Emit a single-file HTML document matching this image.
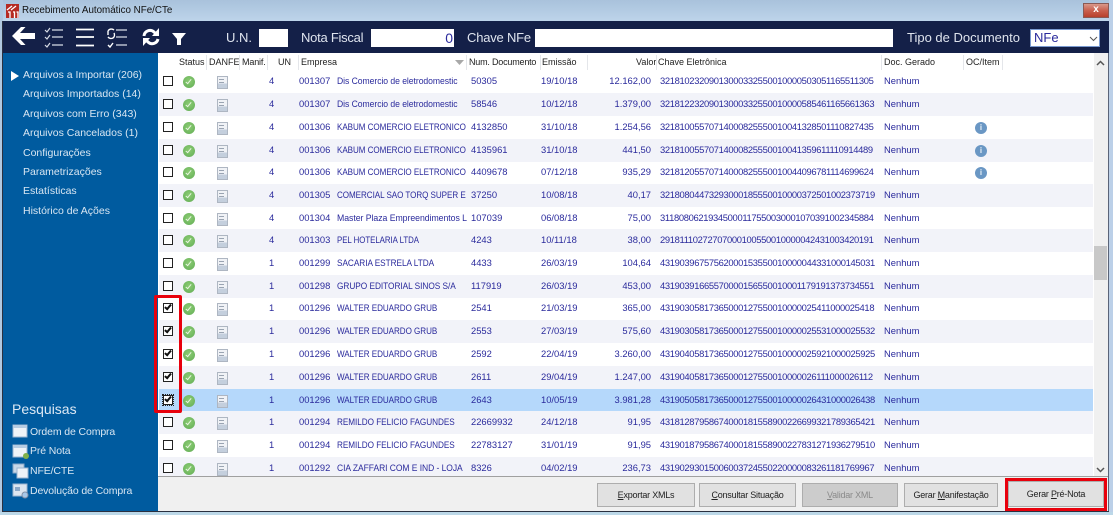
<!DOCTYPE html>
<html><head><meta charset="utf-8"><style>
html,body{margin:0;padding:0}
body{width:1113px;height:515px;overflow:hidden;position:relative;background:#fff;font-family:"Liberation Sans",sans-serif}
div,span{position:absolute;white-space:nowrap}
#title{left:0;top:0;width:1113px;height:21px;background:linear-gradient(#a9c2dc,#bdd4ea)}
#title span{left:22px;top:4px;font-size:9.8px;color:#111;line-height:13px}
#x{left:1083px;top:3px;width:26px;height:15px;background:linear-gradient(#d9988a 0,#c9604e 50%,#b8402c 100%);border:1px solid #8a5a55;box-sizing:border-box;color:#fff;font:bold 10px/12px "Liberation Sans";text-align:center}
#tb{left:4px;top:21px;width:1105px;height:32px;background:#142048}
.tl{color:#dfe4ee;font-size:13px;line-height:18px;top:29px}
.inp{background:#fff;top:29px;height:18px}
#side{left:3px;top:53px;width:155px;height:458px;background:#005b9f}
.sl{color:#d8e6f2;font-size:10.5px;line-height:13px;left:23px}
.ps{color:#d8e6f2;font-size:10.5px;line-height:13px;left:30px;letter-spacing:-.12px}
.h{top:56px;font-size:9px;line-height:13px;color:#222}
.sep{top:55px;width:1px;height:15px;background:#e4e6ea}
.r{left:159px;width:934px;height:23px;font-size:9.4px;line-height:22px;color:#2a2a9c}
.a{background:#f2f3f9}
.s{background:#b5d8fb}
.c{left:4px;top:6px;width:8px;height:8px;border:1px solid #222;background:#fff}
.c.k::after{content:"";position:absolute;left:2px;top:-1px;width:2px;height:5px;border:solid #111;border-width:0 2px 2px 0;transform:rotate(40deg)}
.st{left:24px;top:6px;width:12px;height:12px;border-radius:50%;background:radial-gradient(circle at 50% 40%,#8ccc74,#62ad55)}
.st::after{content:"";position:absolute;left:4px;top:2px;width:2px;height:5px;border:solid #e8f5e0;border-width:0 1.5px 1.5px 0;transform:rotate(40deg)}
.d{left:58px;top:6px;width:11px;height:13px;background:linear-gradient(#f0f2f6 0 58%,#c4cfdd 58% 100%);border:1px solid #aeb6c2;box-sizing:border-box}
.d::after{content:"";position:absolute;left:1px;top:2px;width:5px;height:2px;border-top:1px solid #9aa4b2;border-bottom:1px solid #9aa4b2}
.u{left:110px}.co{left:140px}.e{left:178px;letter-spacing:-.05px;transform-origin:0 50%}.n{left:312px}.em{left:382px}
.v{left:422px;width:70px;text-align:right}.ch{left:501px;letter-spacing:-.33px}.ne{left:725px}
.i{left:816px;top:6px;width:12px;height:12px;border-radius:50%;background:#6a97c4;color:#e8f0f8;font:bold 8px/12px "Liberation Sans";text-align:center}
.rb{border:3.5px solid #e8000c;box-sizing:border-box}
.b{top:483px;height:24px;background:#e1e1e1;border:1px solid #adadad;box-sizing:border-box;font-size:9px;letter-spacing:-.22px;line-height:22px;text-align:center;color:#222}
.b u{text-decoration:underline}
</style></head><body>
<div id="title"><span>Recebimento Automático NFe/CTe</span></div>
<svg style="position:absolute;left:6px;top:4px" width="13" height="14"><rect width="13" height="14" fill="#b52a22"/><path d="M1 6L6 2M5 6L10 2M2 8h2v6M7 8h1.500v6M10.500 8H12v6" stroke="#fff" stroke-width="1.300" fill="none"/></svg>
<div id="x">x</div>
<div style="left:0;top:0;width:3px;height:515px;background:#b0c8e0"></div>
<div style="left:1109px;top:0;width:4px;height:515px;background:#bcd0e8"></div>
<div style="left:2px;top:21px;width:1px;height:491px;background:#2a3040"></div>
<div style="left:1108px;top:21px;width:1px;height:491px;background:#5a6478"></div>
<div style="left:3px;top:511px;width:1106px;height:1px;background:#2a3040"></div>
<div style="left:0;top:512px;width:1113px;height:3px;background:#bcd8e8"></div>
<div style="left:3px;top:21px;width:1106px;height:32px;background:#142048"></div>
<svg style="position:absolute;left:10px;top:25px" width="180" height="24" fill="none" stroke="#fff">
<path d="M2 11L11 2H15.500L10 8H25V14H10L15.500 20H11Z" fill="#fff" stroke="none"/>
<path d="M42 5h11M42 12h11M42 20h11" stroke-width="1.300" stroke="#d8dce6"/>
<path d="M35 5l2 2 3-4M35 12l2 2 3-4M35 20l2 2 3-4" stroke-width="1.200" stroke="#d8dce6"/>
<path d="M66 4.500h18M66 12h18M66 20.500h18" stroke-width="1.800"/>
<path d="M106 5h11M106 12h11M106 20h11" stroke-width="1.300" stroke="#d8dce6"/>
<path d="M98 6a4 4 0 0 1 6-1M104 8a4 4 0 0 1-1 5 4 4 0 0 1-5-1M98 6v4M98 20l2 2 3-4" stroke-width="1.400"/>
<path d="M134 11a6 6 0 0 1 10-4l2 2M148 14a6 6 0 0 1-10 3l-2-2" stroke-width="3"/>
<path d="M149 3v8h-7zM133 21v-8h7z" fill="#fff" stroke="none"/>
<path d="M162 8h14l-5 6v6h-4v-6z" fill="#fff" stroke="none"/>
</svg>
<span class="tl" style="left:226px">U.N.</span>
<div class="inp" style="left:259px;width:29px"></div>
<span class="tl" style="left:301px;letter-spacing:-.25px">Nota Fiscal</span>
<div class="inp" style="left:371px;width:83px;color:#2a2a9c;font-size:14px;line-height:19px;text-align:right;box-sizing:border-box;padding-right:1px">0</div>
<span class="tl" style="left:467px;letter-spacing:-.2px">Chave NFe</span>
<div class="inp" style="left:535px;width:358px"></div>
<span class="tl" style="left:907px">Tipo de Documento</span>
<div class="inp" style="left:1030px;width:70px;border:1px solid #7a9ad0;box-sizing:border-box;color:#2a2a9c;font-size:13px;line-height:15px;padding-left:3px">NFe<svg style="position:absolute;left:58px;top:6px" width="9" height="6" fill="none" stroke="#555"><path d="M1 1l3.500 3.500L8 1"/></svg></div>
<div id="side"></div>
<svg style="position:absolute;left:11px;top:71px" width="9" height="10"><path d="M0 0l8 5-8 5z" fill="#fff"/></svg>
<span class="sl" style="top:69px">Arquivos a Importar (206)</span>
<span class="sl" style="top:88px">Arquivos Importados (14)</span>
<span class="sl" style="top:108px">Arquivos com Erro (343)</span>
<span class="sl" style="top:127px">Arquivos Cancelados (1)</span>
<span class="sl" style="top:147px">Configurações</span>
<span class="sl" style="top:166px">Parametrizações</span>
<span class="sl" style="top:185px">Estatísticas</span>
<span class="sl" style="top:205px">Histórico de Ações</span>
<span style="left:12px;top:400px;font-size:14px;line-height:18px;color:#dce8f4">Pesquisas</span>
<svg style="position:absolute;left:12px;top:424px" width="18" height="76">
<rect x="1" y="1" width="14" height="12" fill="#eef3f8" stroke="#9cb6d0"/><rect x="1" y="1" width="14" height="3" fill="#b6cce2"/>
<rect x="1" y="21" width="14" height="12" fill="#eef3f8" stroke="#9cb6d0"/><rect x="1" y="21" width="14" height="3" fill="#b6cce2"/><circle cx="14" cy="32" r="3" fill="#7fb04a"/>
<rect x="1" y="40" width="11" height="9" fill="#c8d8e8" stroke="#8aa8c8"/><rect x="5" y="44" width="11" height="10" fill="#eef3f8" stroke="#9cb6d0"/>
<rect x="1" y="60" width="14" height="12" fill="#dce6f0" stroke="#9cb6d0"/><rect x="3" y="63" width="5" height="4" fill="#8aa8c8"/><circle cx="13" cy="71" r="3" fill="#a8c8e8" stroke="#8090a8"/>
</svg>
<span class="ps" style="top:426px">Ordem de Compra</span>
<span class="ps" style="top:445px">Pré Nota</span>
<span class="ps" style="top:465px">NFE/CTE</span>
<span class="ps" style="top:485px">Devolução de Compra</span>

<span class="h" style="left:179px">Status</span><div class="sep" style="left:206px"></div>
<span class="h" style="left:209px">DANFE</span><div class="sep" style="left:239px"></div>
<span class="h" style="left:242px;letter-spacing:-.15px">Manif.</span><div class="sep" style="left:267px"></div>
<span class="h" style="left:278px">UN</span><div class="sep" style="left:298px"></div>
<span class="h" style="left:301px">Empresa</span><div class="sep" style="left:466px"></div>
<svg style="position:absolute;left:455px;top:60px" width="9" height="5"><path d="M0 0h9l-4.500 5z" fill="#a8a8a8"/></svg>
<span class="h" style="left:469px;letter-spacing:-.2px">Num. Documento</span><div class="sep" style="left:540px"></div>
<span class="h" style="left:542px">Emissão</span><div class="sep" style="left:587px"></div>
<span class="h" style="left:636px">Valor</span><div class="sep" style="left:656px"></div>
<span class="h" style="left:658px">Chave Eletrônica</span><div class="sep" style="left:881px"></div>
<span class="h" style="left:884px">Doc. Gerado</span><div class="sep" style="left:963px"></div>
<span class="h" style="left:966px">OC/Item</span><div class="sep" style="left:1002px"></div>

<div class="r" style="top:70px"><div class="c"></div><div class="st"></div><div class="d"></div><span class="u">4</span><span class="co">001307</span><span class="e" style="transform:scaleX(.917)">Dis Comercio de eletrodomestic</span><span class="n">50305</span><span class="em">19/10/18</span><span class="v">12.162,00</span><span class="ch">32181023209013000332550010000503051165511305</span><span class="ne">Nenhum</span></div>
<div class="r a" style="top:93px"><div class="c"></div><div class="st"></div><div class="d"></div><span class="u">4</span><span class="co">001307</span><span class="e" style="transform:scaleX(.917)">Dis Comercio de eletrodomestic</span><span class="n">58546</span><span class="em">10/12/18</span><span class="v">1.379,00</span><span class="ch">32181223209013000332550010000585461165661363</span><span class="ne">Nenhum</span></div>
<div class="r" style="top:116px"><div class="c"></div><div class="st"></div><div class="d"></div><span class="u">4</span><span class="co">001306</span><span class="e" style="transform:scaleX(.86)">KABUM COMERCIO ELETRONICO</span><span class="n">4132850</span><span class="em">31/10/18</span><span class="v">1.254,56</span><span class="ch">32181005570714000825550010041328501110827435</span><span class="ne">Nenhum</span><div class="i">i</div></div>
<div class="r a" style="top:139px"><div class="c"></div><div class="st"></div><div class="d"></div><span class="u">4</span><span class="co">001306</span><span class="e" style="transform:scaleX(.86)">KABUM COMERCIO ELETRONICO</span><span class="n">4135961</span><span class="em">31/10/18</span><span class="v">441,50</span><span class="ch">32181005570714000825550010041359611110914489</span><span class="ne">Nenhum</span><div class="i">i</div></div>
<div class="r" style="top:161px"><div class="c"></div><div class="st"></div><div class="d"></div><span class="u">4</span><span class="co">001306</span><span class="e" style="transform:scaleX(.86)">KABUM COMERCIO ELETRONICO</span><span class="n">4409678</span><span class="em">07/12/18</span><span class="v">935,29</span><span class="ch">32181205570714000825550010044096781114699624</span><span class="ne">Nenhum</span><div class="i">i</div></div>
<div class="r a" style="top:184px"><div class="c"></div><div class="st"></div><div class="d"></div><span class="u">4</span><span class="co">001305</span><span class="e" style="transform:scaleX(.86)">COMERCIAL SAO TORQ SUPER E</span><span class="n">37250</span><span class="em">10/08/18</span><span class="v">40,17</span><span class="ch">32180804473293000185550010000372501002373719</span><span class="ne">Nenhum</span></div>
<div class="r" style="top:207px"><div class="c"></div><div class="st"></div><div class="d"></div><span class="u">4</span><span class="co">001304</span><span class="e" style="transform:scaleX(.93)">Master Plaza Empreendimentos L</span><span class="n">107039</span><span class="em">06/08/18</span><span class="v">75,00</span><span class="ch">31180806219345000117550030001070391002345884</span><span class="ne">Nenhum</span></div>
<div class="r a" style="top:229px"><div class="c"></div><div class="st"></div><div class="d"></div><span class="u">4</span><span class="co">001303</span><span class="e" style="transform:scaleX(.84)">PEL HOTELARIA LTDA</span><span class="n">4243</span><span class="em">10/11/18</span><span class="v">38,00</span><span class="ch">29181110272707000100550010000042431003420191</span><span class="ne">Nenhum</span></div>
<div class="r" style="top:252px"><div class="c"></div><div class="st"></div><div class="d"></div><span class="u">1</span><span class="co">001299</span><span class="e" style="transform:scaleX(.88)">SACARIA ESTRELA LTDA</span><span class="n">4433</span><span class="em">26/03/19</span><span class="v">104,64</span><span class="ch">43190396757562000153550010000044331000145031</span><span class="ne">Nenhum</span></div>
<div class="r a" style="top:275px"><div class="c"></div><div class="st"></div><div class="d"></div><span class="u">1</span><span class="co">001298</span><span class="e" style="transform:scaleX(.885)">GRUPO EDITORIAL SINOS S/A</span><span class="n">117919</span><span class="em">26/03/19</span><span class="v">453,00</span><span class="ch">43190391665570000156550010001179191373734551</span><span class="ne">Nenhum</span></div>
<div class="r" style="top:297px"><div class="c k"></div><div class="st"></div><div class="d"></div><span class="u">1</span><span class="co">001296</span><span class="e" style="transform:scaleX(.862)">WALTER EDUARDO GRUB</span><span class="n">2541</span><span class="em">21/03/19</span><span class="v">365,00</span><span class="ch">43190305817365000127550010000025411000025418</span><span class="ne">Nenhum</span></div>
<div class="r a" style="top:320px"><div class="c k"></div><div class="st"></div><div class="d"></div><span class="u">1</span><span class="co">001296</span><span class="e" style="transform:scaleX(.862)">WALTER EDUARDO GRUB</span><span class="n">2553</span><span class="em">27/03/19</span><span class="v">575,60</span><span class="ch">43190305817365000127550010000025531000025532</span><span class="ne">Nenhum</span></div>
<div class="r" style="top:343px"><div class="c k"></div><div class="st"></div><div class="d"></div><span class="u">1</span><span class="co">001296</span><span class="e" style="transform:scaleX(.862)">WALTER EDUARDO GRUB</span><span class="n">2592</span><span class="em">22/04/19</span><span class="v">3.260,00</span><span class="ch">43190405817365000127550010000025921000025925</span><span class="ne">Nenhum</span></div>
<div class="r a" style="top:366px"><div class="c k"></div><div class="st"></div><div class="d"></div><span class="u">1</span><span class="co">001296</span><span class="e" style="transform:scaleX(.862)">WALTER EDUARDO GRUB</span><span class="n">2611</span><span class="em">29/04/19</span><span class="v">1.247,00</span><span class="ch">43190405817365000127550010000026111000026112</span><span class="ne">Nenhum</span></div>
<div class="r s" style="top:389px"><div class="c k" style="outline:1px dotted #222"></div><div class="st"></div><div class="d"></div><span class="u">1</span><span class="co">001296</span><span class="e" style="transform:scaleX(.862)">WALTER EDUARDO GRUB</span><span class="n">2643</span><span class="em">10/05/19</span><span class="v">3.981,28</span><span class="ch">43190505817365000127550010000026431000026438</span><span class="ne">Nenhum</span></div>
<div class="r a" style="top:411px"><div class="c"></div><div class="st"></div><div class="d"></div><span class="u">1</span><span class="co">001294</span><span class="e" style="transform:scaleX(.873)">REMILDO FELICIO FAGUNDES</span><span class="n">22669932</span><span class="em">24/12/18</span><span class="v">91,95</span><span class="ch">43181287958674000181558900226699321789365421</span><span class="ne">Nenhum</span></div>
<div class="r" style="top:434px"><div class="c"></div><div class="st"></div><div class="d"></div><span class="u">1</span><span class="co">001294</span><span class="e" style="transform:scaleX(.873)">REMILDO FELICIO FAGUNDES</span><span class="n">22783127</span><span class="em">31/01/19</span><span class="v">91,95</span><span class="ch">43190187958674000181558900227831271936279510</span><span class="ne">Nenhum</span></div>
<div class="r a" style="top:457px;height:20px"><div class="c"></div><div class="st"></div><div class="d"></div><span class="u">1</span><span class="co">001292</span><span class="e" style="transform:scaleX(.906)">CIA ZAFFARI COM E IND - LOJA</span><span class="n">8326</span><span class="em">04/02/19</span><span class="v">236,73</span><span class="ch">43190293015006003724550220000083261181769967</span><span class="ne">Nenhum</span></div>

<div style="left:1094px;top:53px;width:14px;height:424px;background:#f0f0f0"></div>
<div style="left:1094px;top:246px;width:13px;height:34px;background:#c8c8c8"></div>
<svg style="position:absolute;left:1096px;top:60px" width="9" height="6" fill="none" stroke="#555" stroke-width="1.500"><path d="M1 5l3.500-3.500L8 5"/></svg>
<svg style="position:absolute;left:1096px;top:467px" width="9" height="6" fill="none" stroke="#555" stroke-width="1.500"><path d="M1 1l3.500 3.500L8 1"/></svg>
<div style="left:158px;top:476px;width:950px;height:35px;background:#f0f0f0;border-top:1px solid #a0a0a0;box-sizing:border-box"></div>
<div class="b" style="left:597px;width:98px"><u>E</u>xportar XMLs</div>
<div class="b" style="left:699px;width:97px"><u>C</u>onsultar Situação</div>
<div class="b" style="left:802px;width:96px;background:#cccccc;color:#8a8a8a"><u>V</u>alidar XML</div>
<div class="b" style="left:904px;width:94px">Gerar <u>M</u>anifestação</div>
<div class="b" style="left:1008px;width:96px;top:481px;height:26px;line-height:24px">Gerar <u>P</u>ré-Nota</div>
<div class="rb" style="left:154px;top:295px;width:28px;height:118px;border-radius:2px"></div>
<div class="rb" style="left:1005px;top:478px;width:102px;height:33px"></div>
</body></html>
